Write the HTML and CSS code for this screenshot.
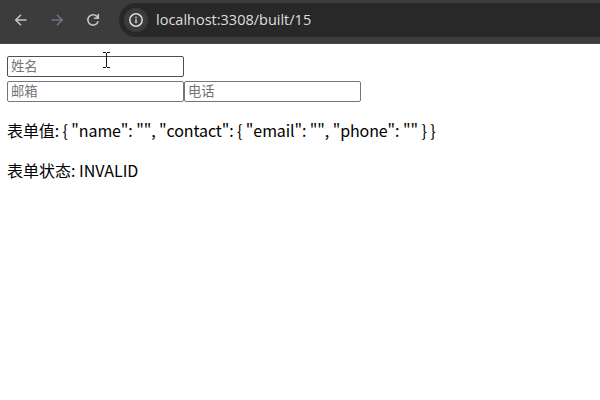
FILE: index.html
```html
<!DOCTYPE html>
<html lang="zh-CN">
<head>
<meta charset="utf-8">
<title>表单</title>
<link rel="stylesheet" href="styles.css">
</head>
<body>
<header class="toolbar">
  <nav class="nav">
    <svg class="icon" viewBox="0 0 14 14"><path d="M12.5 7H2M7 1.8L1.8 7L7 12.2"/></svg>
    <svg class="icon icon-disabled" viewBox="0 0 14 14"><path d="M1.5 7H12M7 1.8L12.2 7L7 12.2"/></svg>
    <svg class="icon icon-reload" viewBox="0 0 14 14"><path d="M12.1 8.2A5.2 5.2 0 1 1 10.9 3.4L12.2 4.8M12.3 1V5.2H8"/></svg>
  </nav>
  <div class="address">
    <span class="info"><svg class="info-icon" viewBox="0 0 14 14"><circle cx="7" cy="7" r="6.2"/><path d="M7 6.2V10.2M7 3.8V5.2"/></svg></span>
    <span class="url">localhost:3308/built/15</span>
  </div>
</header>
<main class="page">
  <div class="row"><input class="field field-hover" placeholder="姓名"></div>
  <div class="row"><input class="field" placeholder="邮箱"><input class="field" placeholder="电话"></div>
  <p class="output output-value">表单值: { "name": "", "contact": { "email": "", "phone": "" } }</p>
  <p class="output">表单状态: INVALID</p>
</main>
<svg class="cursor" viewBox="0 0 7 16"><path d="M0 .5H3M4 .5H7M3.5 1V15M0 15.5H3M4 15.5H7"/></svg>
</body>
</html>
```
FILE: styles.css
```css
body {
  margin: 0;
  background: #fff;
  color: #000;
  font-family: "Noto Sans CJK SC", sans-serif;
  overflow: hidden;
}
.toolbar {
  display: flex;
  box-sizing: border-box;
  height: 44px;
  padding-top: 3px;
  background: #3c3c3c;
  border-bottom: 1px solid #474546;
}
.nav {
  display: flex;
  align-items: center;
  gap: 22px;
  box-sizing: border-box;
  width: 119px;
  height: 34px;
  padding-left: 14px;
}
.icon {
  width: 14px;
  height: 14px;
  fill: none;
  stroke: #c9c5bd;
  stroke-width: 1.6;
}
.icon-disabled {
  stroke: #6b7683;
}
.address {
  display: flex;
  align-items: center;
  flex: 1;
  box-sizing: border-box;
  height: 34px;
  padding-left: 5px;
  gap: 8px;
  background: #282828;
  border-radius: 17px 0 0 17px;
}
.info {
  display: flex;
  align-items: center;
  justify-content: center;
  width: 24px;
  height: 24px;
  border-radius: 50%;
  background: #3c3c3c;
}
.info-icon {
  width: 14px;
  height: 14px;
  fill: none;
  stroke: #dedbd5;
  stroke-width: 1.5;
}
.url {
  font: 14.5px/20px "Open Sans", sans-serif;
  color: #dfdfdf;
}
.page {
  padding: 12px 7px 0;
}
.row {
  display: flex;
  height: 21px;
  margin-bottom: 4px;
}
.field {
  box-sizing: border-box;
  width: 177px;
  height: 21px;
  margin: 0;
  padding: 0 3px 2px;
  border: 1px solid #767676;
  border-radius: 2px;
  background: #fff;
  font: 13.333px "Noto Sans CJK SC", sans-serif;
}
.field::placeholder {
  color: #757575;
}
.field-hover {
  border-color: #4f4f4f;
}
.output {
  margin: 16px 0;
  font-size: 16px;
  line-height: 24px;
}
.output-value {
  letter-spacing: -0.1px;
}
.cursor {
  position: absolute;
  left: 103px;
  top: 52px;
  width: 7px;
  height: 16px;
  fill: none;
  stroke: #101020;
  stroke-width: 1;
}
```
